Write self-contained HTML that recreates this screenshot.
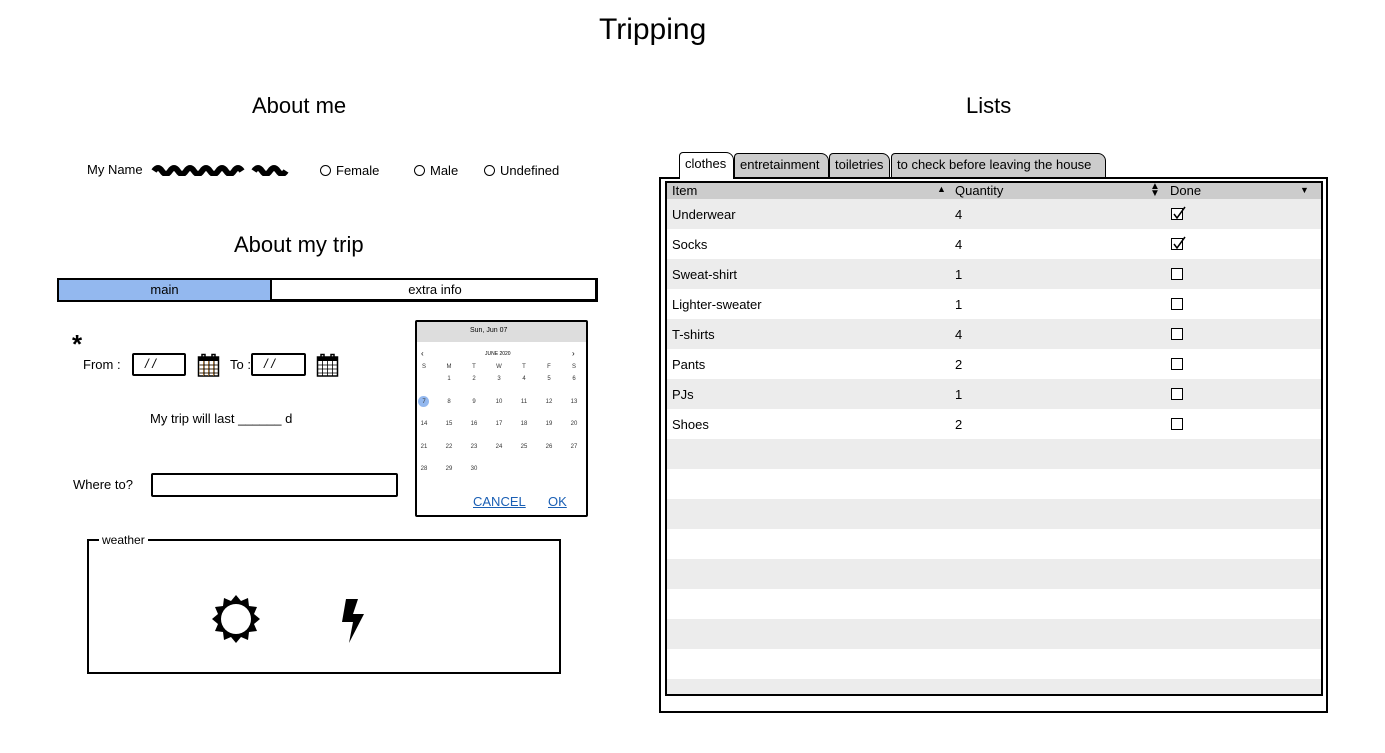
<!DOCTYPE html>
<html><head><meta charset="utf-8"><style>
*{margin:0;padding:0;box-sizing:border-box}
body{width:1385px;height:753px;background:#fff;position:relative;font-family:"Liberation Sans",sans-serif;color:#000;overflow:hidden}
.a{position:absolute;white-space:nowrap}
.t13{font-size:13px}
.rad{display:inline-block;width:11px;height:11px;border:1px solid #000;border-radius:50%;vertical-align:-1px;margin-right:5px}
.box{position:absolute;border:2px solid #000;border-radius:2px;background:#fff}
.cal .d{position:absolute;font-size:6px;color:#333;width:20px;text-align:center}
.row{position:absolute;left:0;width:654px;height:30px;font-size:13px}
.row span{position:absolute;top:8px}
.cb{position:absolute;left:504px;top:9px;width:12px;height:12px;border:1px solid #000;background:#fff}
.tab{position:absolute;top:153px;height:24px;border:1.5px solid #000;border-bottom:none;border-radius:4px 8px 0 0;background:#ccc;font-size:13px;padding:3px 5px 0}
</style></head><body>
<div class="a" style="left:599px;top:13px;font-size:30px">Tripping</div>
<div class="a" style="left:252px;top:93px;font-size:22px">About me</div>
<div class="a" style="left:966px;top:93px;font-size:22px">Lists</div>

<div class="a t13" style="left:87px;top:162px">My Name</div>
<svg class="a" style="left:150px;top:162px" width="145" height="14"><path d="M4 9 Q8 3 12 9 T20 9 T28 9 T36 9 T44 9 T52 9 T60 9 T68 9 T76 9 T84 9 T92 9 M104 9 Q108 3 112 9 T120 9 T128 9 T136 9" stroke="#000" stroke-width="6" fill="none"/></svg>
<div class="a t13" style="left:320px;top:163px"><span class="rad"></span>Female</div>
<div class="a t13" style="left:414px;top:163px"><span class="rad"></span>Male</div>
<div class="a t13" style="left:484px;top:163px"><span class="rad"></span>Undefined</div>

<div class="a" style="left:234px;top:232px;font-size:22px">About my trip</div>
<div class="a" style="left:57px;top:278px;width:541px;height:24px;border:2px solid #000;border-bottom-width:3px;border-right-width:3px;background:#fff"></div>
<div class="a t13" style="left:59px;top:280px;width:213px;height:20px;background:#93b8ef;text-align:center;line-height:20px;border-right:2px solid #000">main</div>
<div class="a t13" style="left:274px;top:280px;width:322px;height:20px;text-align:center;line-height:20px">extra info</div>

<div class="a" style="left:72px;top:331px;font-size:26px;font-weight:bold;line-height:26px">*</div>
<div class="a t13" style="left:83px;top:357px">From :</div>
<div class="box" style="left:132px;top:353px;width:54px;height:23px"></div>
<div class="a t13" style="left:145px;top:356px;font-style:italic">/ /</div>
<svg class="a" style="left:197px;top:353px" width="23" height="24"><rect x="1.5" y="4" width="20" height="19" fill="#fff" stroke="#000" stroke-width="1.5"/><rect x="1.5" y="4" width="20" height="4" fill="#000"/><path d="M2 12H21M2 16H21M2 20H21M6.5 8V23M11.5 8V23M16.5 8V23" stroke="#e08a1e" stroke-width="0.8"/><path d="M2 12H21M2 16H21M2 20H21M6.5 8V23M11.5 8V23M16.5 8V23" stroke="#000" stroke-width="0.8" transform="translate(0.6,0)"/><path d="M5 6V1.5H8V6M15 6V1.5H18V6" fill="none" stroke="#000" stroke-width="1.5"/></svg>
<div class="a t13" style="left:230px;top:357px">To :</div>
<div class="box" style="left:251px;top:353px;width:55px;height:23px"></div>
<div class="a t13" style="left:264px;top:356px;font-style:italic">/ /</div>
<svg class="a" style="left:316px;top:353px" width="23" height="24"><rect x="1.5" y="4" width="20" height="19" fill="#fff" stroke="#000" stroke-width="1.5"/><rect x="1.5" y="4" width="20" height="4" fill="#000"/><path d="M2 12H21M2 16H21M2 20H21M6.5 8V23M11.5 8V23M16.5 8V23" stroke="#000" stroke-width="0.8"/><path d="M5 6V1.5H8V6M15 6V1.5H18V6" fill="none" stroke="#000" stroke-width="1.5"/></svg>
<div class="a t13" style="left:150px;top:411px">My trip will last ______ d</div>
<div class="a t13" style="left:73px;top:477px">Where to?</div>
<div class="box" style="left:151px;top:473px;width:247px;height:24px"></div>

<div class="box cal" style="left:415px;top:320px;width:173px;height:197px">
<div class="a" style="left:0;top:0;width:169px;height:20px;background:#ddd"></div>
<div class="a" style="left:53px;top:5px;font-size:7px">Sun, Jun 07</div>
<div class="a" style="left:4px;top:27px;font-size:8px">‹</div>
<div class="a" style="left:155px;top:27px;font-size:8px">›</div>
<div class="a" style="left:68px;top:29px;font-size:5px">JUNE 2020</div>
<div class="a" style="left:0;top:398px"></div>
<div class="a" style="left:1px;top:74px;width:11px;height:11px;border-radius:50%;background:#93b8ef"></div>
<div id="g"></div>
<div class="a" style="left:56px;top:172px;font-size:13px;color:#1a5fb4;text-decoration:underline">CANCEL</div>
<div class="a" style="left:131px;top:172px;font-size:13px;color:#1a5fb4;text-decoration:underline">OK</div>
</div>

<fieldset class="a" style="left:87px;top:533px;width:474px;height:141px;border:2px solid #000;padding:0">
<legend style="font-size:12px;margin-left:10px;padding:0 3px">weather</legend></fieldset>
<svg class="a" style="left:212px;top:595px" width="48" height="48"><g transform="translate(24,24)"><path d="M0-24L5-18 12-21 13-13 21-12 18-5 24 0 18 5 21 12 13 13 12 21 5 18 0 24-5 18-12 21-13 13-21 12-18 5-24 0-18-5-21-12-13-13-12-21-5-18Z" fill="#000"/><circle r="15" fill="#fff"/></g></svg>
<svg class="a" style="left:340px;top:597px" width="30" height="48"><path d="M6 2H18L13 17H24L9 46 13 25H2Z" fill="#000"/></svg>

<div class="tab" style="left:734px;width:95px">entretainment</div>
<div class="tab" style="left:829px;width:61px">toiletries</div>
<div class="tab" style="left:891px;width:215px">to check before leaving the house</div>
<div class="tab" style="left:679px;width:55px;background:#fff;height:27px;top:152px;z-index:2">clothes</div>
<div class="a" style="left:659px;top:177px;width:669px;height:536px;border:2px solid #000;background:#fff"></div>
<div class="a" style="left:665px;top:181px;width:658px;height:515px;border:2px solid #000;overflow:hidden;background:#fff">
<div class="row" style="top:0;height:16px;background:#ccc"><span style="left:5px;top:0">Item</span><span style="left:270px;top:1px;font-size:9px">▲</span><span style="left:288px;top:0">Quantity</span><span style="left:483px;top:0;font-size:10px;line-height:7px">▲<br>▼</span><span style="left:503px;top:0">Done</span><span style="left:633px;top:2px;font-size:9px">▼</span></div>
<div id="rows"></div>
</div>
<script>
var items=[["Underwear",4,1],["Socks",4,1],["Sweat-shirt",1,0],["Lighter-sweater",1,0],["T-shirts",4,0],["Pants",2,0],["PJs",1,0],["Shoes",2,0]];
var h="";for(var i=0;i<17;i++){var t=16+i*30;var it=items[i];h+='<div class="row" style="top:'+t+'px;background:'+(i%2?'#fff':'#ececec')+'">';if(it){h+='<span style="left:5px">'+it[0]+'</span><span style="left:288px">'+it[1]+'</span><div class="cb">'+(it[2]?'<svg width="14" height="14" style="position:absolute;left:0;top:-3px"><path d="M2 8L5 12L13 1" stroke="#000" stroke-width="1.5" fill="none"/></svg>':'')+'</div>';}h+='</div>';}
document.getElementById("rows").innerHTML=h;
var g="",days="SMTWTFS";for(var c=0;c<7;c++)g+='<div class="d" style="left:'+(c*25-3)+'px;top:42px">'+days[c]+'</div>';
var d=1,r=0,c=1;while(d<=30){g+='<div class="d" style="left:'+(c*25-3)+'px;top:'+(54+r*22.5)+'px">'+d+'</div>';d++;c++;if(c>6){c=0;r++;}}
document.getElementById("g").outerHTML=g;
</script>
</body></html>
